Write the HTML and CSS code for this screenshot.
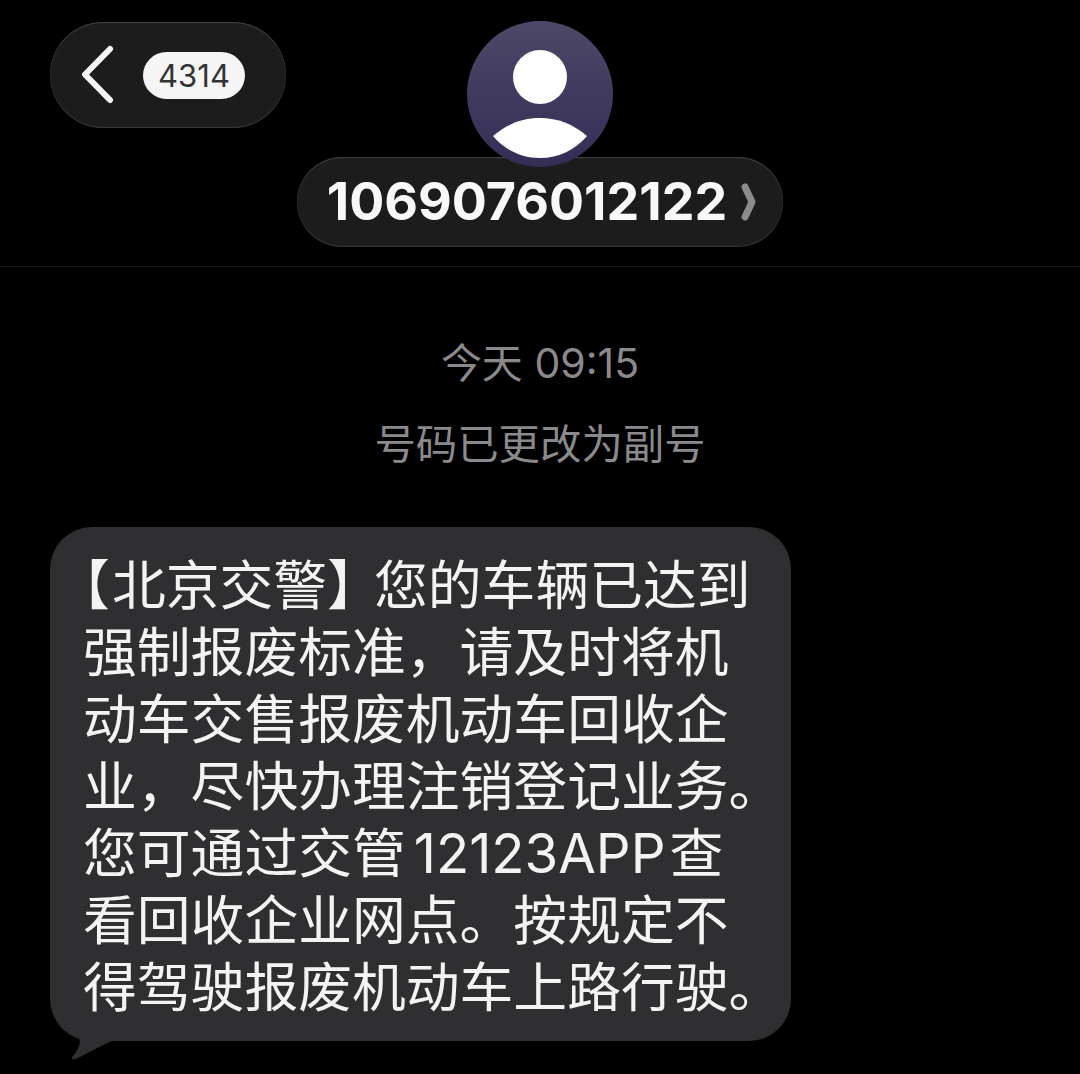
FILE: index.html
```html
<!DOCTYPE html>
<html lang="zh-CN">
  <head>
    <meta charset="utf-8">
    <title>信息</title>
    <link rel="stylesheet" href="styles.css">
  </head>
  <body>
    <header class="top">
      <div class="back">
        <svg class="back-arrow" viewBox="0 0 36 60" aria-hidden="true">
          <path d="M30 4 L5 29.500 L30 55" />
        </svg>
        <span class="badge">4314</span>
      </div>
      <div class="contact">
        <svg class="avatar" viewBox="0 0 146 146" aria-hidden="true">
          <defs>
            <linearGradient id="avatarFill" x1="0" y1="0" x2="0" y2="1">
              <stop offset="0" stop-color="#4c4867" />
              <stop offset="1" stop-color="#342e56" />
            </linearGradient>
          </defs>
          <circle cx="73" cy="73" r="73" fill="url(#avatarFill)" />
          <circle cx="73" cy="56" r="27" fill="#fff" />
          <path fill="#fff" d="M26 115 C40 103 55 97 73 97 C91 97 106 103 120 115 C108 129 92 137 73 137 C54 137 38 129 26 115 Z" />
        </svg>
        <div class="number">
          <span>1069076012122</span>
          <svg class="number-arrow" viewBox="0 0 16 38" aria-hidden="true">
            <path d="M4 4 L11 19 L4 34" />
          </svg>
        </div>
      </div>
    </header>

    <main class="thread">
      <p class="meta meta-time">今天 09:15</p>
      <p class="meta meta-note">号码已更改为副号</p>

      <div class="bubble">
        <svg class="tail" viewBox="0 0 62 56" aria-hidden="true">
          <path d="M2 0 C5 10 12 17 23 23 C29 28 31 33 29 39 C27 44 25 47 22 50 C21 52 24 53 26 52 C38 46 48 40 62 34 L62 0 Z" />
        </svg>
        <p class="line"><span class="open">【</span>北京交警<span class="close">】</span>您的车辆已达到</p>
        <p class="line">强制报废标准，请及时将机</p>
        <p class="line">动车交售报废机动车回收企</p>
        <p class="line">业，尽快办理注销登记业务。</p>
        <p class="line">您可通过交管<span class="latin">12123APP</span>查</p>
        <p class="line">看回收企业网点。按规定不</p>
        <p class="line">得驾驶报废机动车上路行驶。</p>
      </div>
    </main>
  </body>
</html>
```

FILE: styles.css
```css
html, body {
  margin: 0;
  height: 1074px;
  overflow: hidden;
  background: #000;
}
body {
  font-family: "Liberation Sans", "Noto Sans CJK SC", sans-serif;
}
p {
  margin: 0;
}

.top {
  display: grid;
  grid-template-columns: 1fr auto 1fr;
  height: 267px;
  box-sizing: border-box;
  padding-top: 21px;
  border-bottom: 1px solid #161616;
}

.back {
  justify-self: start;
  display: flex;
  align-items: center;
  width: 236px;
  height: 106px;
  box-sizing: border-box;
  margin: 1px 0 0 50px;
  padding-left: 30px;
  gap: 29px;
  border-radius: 53px;
  background: #1c1c1d;
  box-shadow: inset 0 1px 1px #444, inset 0 -1px 1px #3a3a3a;
}
.back-arrow {
  width: 36px;
  height: 60px;
  margin-right: -2px;
}
.back-arrow path {
  fill: none;
  stroke: #f6f6f6;
  stroke-width: 6;
  stroke-linecap: round;
  stroke-linejoin: round;
}
.badge {
  width: 102px;
  height: 47px;
  border-radius: 24px;
  background: #f5f5f5;
  color: #333;
  font: 400 31px/47px Inter, sans-serif;
  text-align: center;
}

.contact {
  grid-column: 2;
  display: flex;
  flex-direction: column;
  align-items: center;
}
.avatar {
  position: relative;
  z-index: 1;
  display: block;
  width: 146px;
  height: 146px;
}
.number {
  display: flex;
  align-items: center;
  justify-content: center;
  gap: 14px;
  width: 486px;
  height: 90px;
  box-sizing: border-box;
  margin-top: -10px;
  padding-left: 4px;
  border-radius: 45px;
  background: #1c1c1d;
  box-shadow: inset 0 1px 1px #444, inset 0 -1px 1px #3a3a3a;
  color: #f8f8f8;
  font: 700 52px/90px Inter, sans-serif;
}
.number-arrow {
  width: 16px;
  height: 38px;
}
.number-arrow path {
  fill: none;
  stroke: #8b8b8b;
  stroke-width: 7;
  stroke-linecap: round;
  stroke-linejoin: round;
}

.thread {
  padding: 0 50px;
}
.meta {
  color: #8a8a8c;
  text-align: center;
}
.meta-time {
  margin-top: 71px;
  font: 400 41px/50px Inter, "Noto Sans CJK SC", sans-serif;
}
.meta-note {
  margin-top: 28px;
  font: 400 41.400px/50px "Noto Sans CJK SC", sans-serif;
}

.bubble {
  position: relative;
  width: 741px;
  height: 514px;
  box-sizing: border-box;
  margin-top: 61px;
  padding: 25px 0 0 33px;
  border-radius: 42px;
  background: #2f2f31;
}
.tail {
  position: absolute;
  left: 0;
  top: 480px;
  width: 62px;
  height: 56px;
  fill: #2f2f31;
}
.line {
  position: relative;
  color: #f3f3f3;
  white-space: nowrap;
  font: 400 53.800px/67px Inter, "Noto Sans CJK SC", sans-serif;
}
.open {
  margin-right: 2px;
  font-feature-settings: "halt";
}
.close {
  margin-right: 20px;
  font-feature-settings: "halt";
}
.latin {
  margin: 0 4px 0 8px;
  font-size: 54.500px;
}
```
